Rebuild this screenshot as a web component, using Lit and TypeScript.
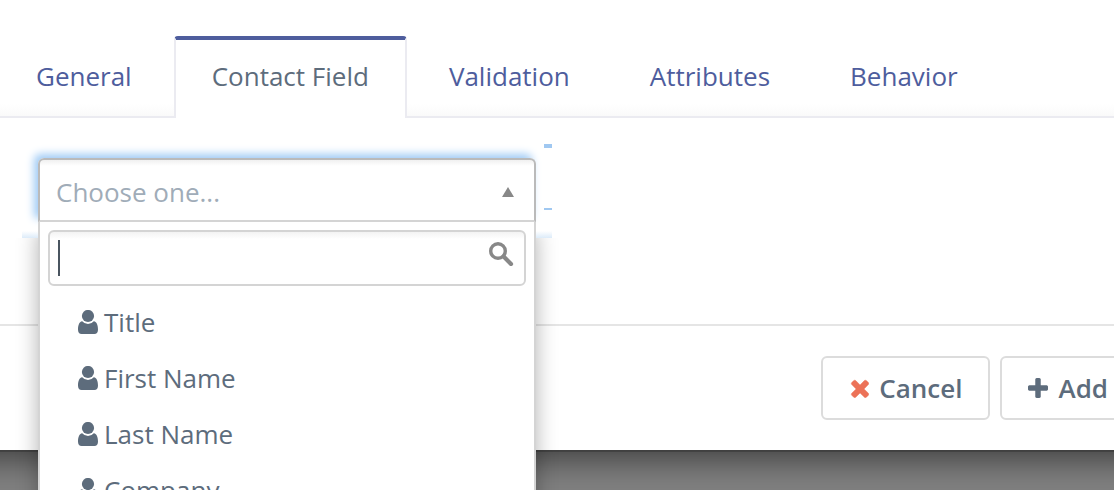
import { LitElement, html, css, svg } from "lit";
import { customElement, state } from "lit/decorators.js";

const USER = svg`<circle cx="10" cy="6" r="6.1"/><path d="M4.2 11.2A7.6 7.6 0 0 0 15.8 11.2C19 11.8 20 15.5 20 19.8C20 22.6 18.6 24 16.4 24H3.6C1.4 24 0 22.6 0 19.8C0 15.5 1 11.8 4.2 11.2Z"/>`;
const SEARCH = svg`<circle cx="9" cy="9" r="7.3" fill="none" stroke="#888" stroke-width="3.4"/><path d="M14.6 14.6L22 22" fill="none" stroke="#888" stroke-width="4.2" stroke-linecap="round"/>`;
const TIMES = svg`<path d="M1298 1322q0 40-28 68l-136 136q-28 28-68 28t-68-28l-294-294-294 294q-28 28-68 28t-68-28l-136-136q-28-28-28-68t28-68l294-294-294-294q-28-28-28-68t28-68l136-136q28-28 68-28t68 28l294 294 294-294q28-28 68-28t68 28l136 136q28 28 28 68t-28 68l-294 294 294 294q28 28 28 68z"/>`;
const PLUS = svg`<path d="M1408 736v192q0 40-28 68t-68 28h-416v416q0 40-28 68t-68 28h-192q-40 0-68-28t-28-68v-416h-416q-40 0-68-28t-28-68v-192q0-40 28-68t68-28h416v-416q0-40 28-68t68-28h192q40 0 68 28t28 68v416h416q40 0 68 28t28 68z"/>`;

@customElement("app-root")
export class AppRoot extends LitElement {
  @state() private active = "Contact Field";

  private tabs = ["General", "Contact Field", "Validation", "Attributes", "Behavior"];
  private fields = ["Title", "First Name", "Last Name", "Company"];

  static styles = css`
    :host {
      display: block;
      height: 100vh;
      overflow: hidden;
      background: #808080;
      color: #5d6c7c;
      font: 26px/36px "Open Sans", sans-serif;
    }
    * {
      box-sizing: border-box;
    }
    .modal {
      margin: 0 -40px;
      padding: 0 40px;
      background: #fff;
      box-shadow: 0 0 0 2px rgba(0, 0, 0, 0.2), 0 10px 30px rgba(0, 0, 0, 0.5);
    }
    .tabs {
      display: flex;
      gap: 4px;
      margin-left: -2px;
      padding-top: 36px;
      border-bottom: 2px solid #ebebf1;
      background: linear-gradient(to top, #fafafa, #fff 12px);
    }
    .tab {
      padding: 18px 36px 22px;
      border: 2px solid transparent;
      border-top-width: 4px;
      border-bottom: 0;
      color: #4e5d9d;
      text-decoration: none;
      white-space: nowrap;
    }
    .tab.active {
      position: relative;
      margin-bottom: -2px;
      padding-bottom: 24px;
      border-color: #ebebf1;
      border-top-color: #4e5d9d;
      border-radius: 4px 4px 0 0;
      background: #fff;
      color: #5d6c7c;
    }
    .body {
      padding: 0 22px 86px;
    }
    .field {
      position: relative;
      width: 530px;
      max-width: 100%;
      padding: 40px 16px 16px;
      background:
        linear-gradient(#a0c8f1, #a0c8f1) right top 26px / 8px 4px no-repeat,
        linear-gradient(#a0c8f1, #a0c8f1) right top 90px / 8px 2px no-repeat,
        linear-gradient(#fff, #dcebf9) left bottom / 100% 7px no-repeat;
    }
    .picker {
      position: relative;
      display: grid;
    }
    .picker > * {
      grid-area: 1 / 1;
    }
    select {
      appearance: none;
      width: 100%;
      height: 64px;
      padding: 4px 16px 0;
      border: 2px solid #bababa;
      border-bottom-color: #d4d4d4;
      border-radius: 6px 6px 0 0;
      outline: 0;
      background: linear-gradient(#f0f0f0, #fff 6px);
      box-shadow: -4px -4px 8px #a0cbf5;
      color: #a0acb8;
      font: inherit;
    }
    .arrow {
      align-self: center;
      justify-self: end;
      margin: 4px 22px 0 0;
      fill: #888;
      pointer-events: none;
    }
    .menu {
      position: absolute;
      top: 100%;
      left: 0;
      right: 0;
      z-index: 2;
      margin: -16px 16px 0;
      padding: 8px;
      border: 2px solid #d4d4d4;
      border-top: 0;
      background: #fff;
      box-shadow: 0 8px 20px rgba(0, 0, 0, 0.3);
      clip-path: polygon(
        0 0,
        100% 0,
        100% 16px,
        calc(100% + 30px) 16px,
        calc(100% + 30px) 100%,
        -30px 100%,
        -30px 16px,
        0 16px
      );
    }
    .search {
      display: grid;
      align-items: center;
    }
    .search > * {
      grid-area: 1 / 1;
    }
    .search input {
      width: 100%;
      height: 56px;
      padding: 0 44px 0 8px;
      border: 2px solid #d4d4d4;
      border-radius: 6px;
      outline: 0;
      background: linear-gradient(#f3f3f3, #fff 7px);
      caret-color: transparent;
      color: inherit;
      font: inherit;
    }
    .caret {
      width: 2px;
      height: 36px;
      margin-left: 10px;
      background: #4a5560;
    }
    .glass {
      justify-self: end;
      margin: 0 12px 8px 0;
    }
    ul {
      margin: 8px 0 0;
      padding: 0;
      list-style: none;
    }
    li {
      display: flex;
      align-items: center;
      gap: 6px;
      height: 56px;
      padding-left: 30px;
    }
    svg {
      display: block;
      fill: currentColor;
    }
    .footer {
      display: flex;
      justify-content: flex-end;
      gap: 10px;
      margin-right: -40px;
      padding: 30px 18px 30px 0;
      border-top: 2px solid #e5e5e5;
    }
    button {
      display: flex;
      align-items: center;
      gap: 10px;
      height: 64px;
      padding: 0 26px;
      border: 2px solid #dcdcdc;
      border-radius: 6px;
      background: #fff;
      color: inherit;
      font: inherit;
      font-weight: 600;
    }
    .cross {
      fill: #ec7258;
    }
  `;

  private pick(e: Event, tab: string) {
    e.preventDefault();
    this.active = tab;
  }

  render() {
    return html`
      <main class="modal">
        <nav class="tabs">
          ${this.tabs.map(
            (t) => html`<a
              class="tab ${t === this.active ? "active" : ""}"
              href="#"
              @click=${(e: Event) => this.pick(e, t)}
              >${t}</a
            >`
          )}
        </nav>
        <section class="body">
          <div class="field">
            <div class="picker">
              <select aria-label="Contact Field" @mousedown=${(e: Event) => e.preventDefault()}>
                <option>Choose one...</option>
              </select>
              <svg class="arrow" width="12" height="10" viewBox="0 0 12 10"><path d="M6 0l6 10H0z" /></svg>
            </div>
            <div class="menu">
              <div class="search">
                <input type="text" aria-label="Search fields" autocomplete="off" />
                <span class="caret"></span>
                <svg class="glass" width="25" height="24" viewBox="0 0 25 24">${SEARCH}</svg>
              </div>
              <ul>
                ${this.fields.map(
                  (f) => html`<li>
                    <svg width="20" height="24" viewBox="0 0 20 24">${USER}</svg><span>${f}</span>
                  </li>`
                )}
              </ul>
            </div>
          </div>
        </section>
        <footer class="footer">
          <button type="button">
            <svg class="cross" width="20" height="20" viewBox="-48 216 1360 1360" stroke="#ec7258" stroke-width="30">${TIMES}</svg>Cancel
          </button>
          <button type="button">
            <svg width="20" height="20" viewBox="0 128 1408 1408">${PLUS}</svg>Add
          </button>
        </footer>
      </main>
    `;
  }
}
